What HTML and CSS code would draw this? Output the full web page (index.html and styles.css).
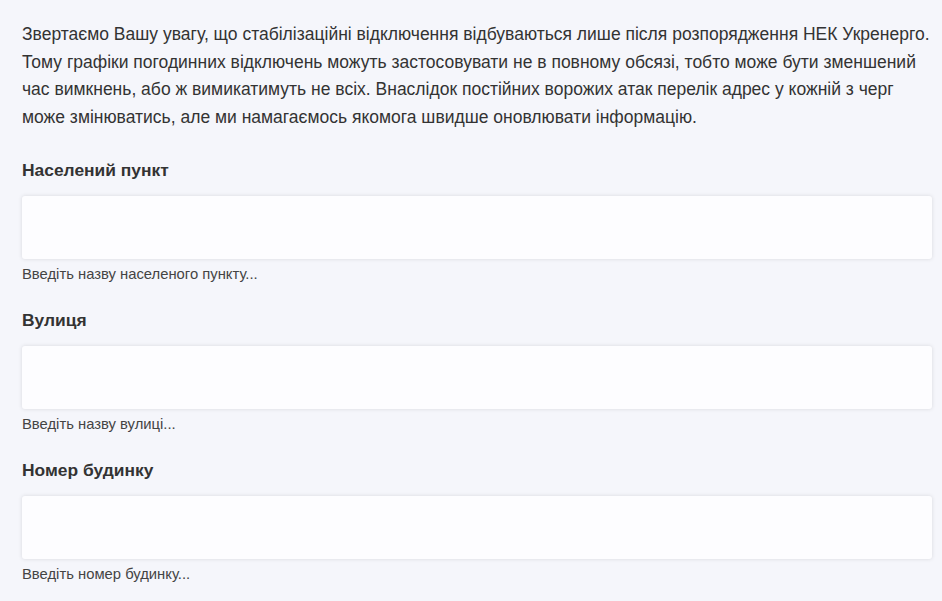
FILE: index.html
```html
<!DOCTYPE html>
<html lang="uk">
<head>
<meta charset="utf-8">
<link rel="stylesheet" href="styles.css">
</head>
<body>
<div class="page">
  <p class="notice">Звертаємо Вашу увагу, що стабілізаційні відключення відбуваються лише після розпорядження НЕК Укренерго. Тому графіки погодинних відключень можуть застосовувати не в повному обсязі, тобто може бути зменшений час вимкнень, або ж вимикатимуть не всіх. Внаслідок постійних ворожих атак перелік адрес у кожній з черг може змінюватись, але ми намагаємось якомога швидше оновлювати інформацію.</p>
  <div class="field">
    <label class="label" for="city">Населений пункт</label>
    <input class="input" id="city" type="text">
    <div class="hint">Введіть назву населеного пункту...</div>
  </div>
  <div class="field">
    <label class="label" for="street">Вулиця</label>
    <input class="input" id="street" type="text">
    <div class="hint">Введіть назву вулиці...</div>
  </div>
  <div class="field">
    <label class="label" for="house">Номер будинку</label>
    <input class="input" id="house" type="text">
    <div class="hint">Введіть номер будинку...</div>
  </div>
</div>
</body>
</html>
```
FILE: styles.css
```css
html, body {
  margin: 0;
  padding: 0;
  background: #f5f6fb;
}
body {
  font-family: "Liberation Sans", Arial, sans-serif;
  color: #333;
}
.page {
  padding: 21px 10px 0 22px;
}
.notice {
  margin: 0;
  font-size: 17.5px;
  line-height: 27.5px;
}
.field {
  display: flex;
  flex-direction: column;
  margin-top: 27px;
}
.label {
  font-weight: bold;
  font-size: 17.4px;
  line-height: 24px;
  color: #333;
}
.input {
  margin-top: 14px;
  height: 63px;
  box-sizing: border-box;
  border: none;
  border-radius: 3px;
  background: #fdfdff;
  box-shadow: 0 0 4px rgba(0,0,0,0.12);
  font: inherit;
}
.hint {
  margin-top: 5px;
  font-size: 14.8px;
  line-height: 20px;
  color: #444;
}
.field + .field {
  margin-top: 24px;
}
```
